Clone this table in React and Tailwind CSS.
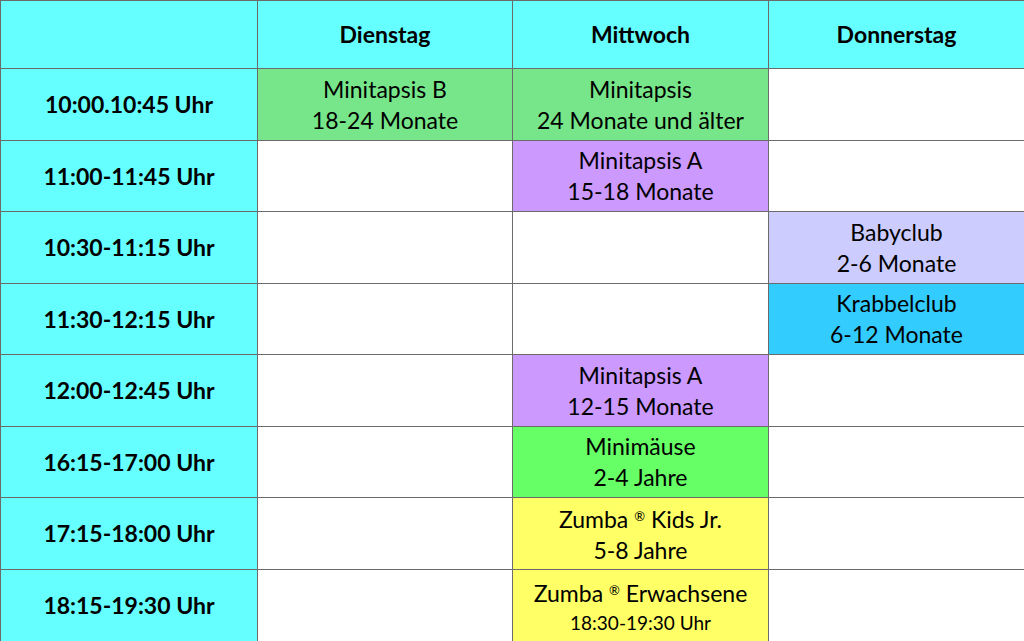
import React from "react";

const cols = ["w-[257px]", "w-[255px]", "w-[256px]", "w-[256px]"];

const colors = {
    cyan: "bg-[#66ffff]",
    green: "bg-[#77e68a]",
    purple: "bg-[#cc99ff]",
    lavender: "bg-[#ccccff]",
    blue: "bg-[#33ccff]",
    lime: "bg-[#66ff66]",
    yellow: "bg-[#ffff66]",
    white: "bg-white",
};

const rows = [
    {
        h: "h-[72px]",
        time: "10:00.10:45 Uhr",
        cells: [
            { c: "green", lines: ["Minitapsis B", "18-24 Monate"] },
            { c: "green", lines: ["Minitapsis", "24 Monate und älter"] },
            null,
        ],
    },
    {
        h: "h-[71px]",
        time: "11:00-11:45 Uhr",
        cells: [null, { c: "purple", lines: ["Minitapsis A", "15-18 Monate"] }, null],
    },
    {
        h: "h-[72px]",
        time: "10:30-11:15 Uhr",
        cells: [null, null, { c: "lavender", lines: ["Babyclub", "2-6 Monate"] }],
    },
    {
        h: "h-[71px]",
        time: "11:30-12:15 Uhr",
        cells: [null, null, { c: "blue", lines: ["Krabbelclub", "6-12 Monate"] }],
    },
    {
        h: "h-[72px]",
        time: "12:00-12:45 Uhr",
        cells: [null, { c: "purple", lines: ["Minitapsis A", "12-15 Monate"] }, null],
    },
    {
        h: "h-[71px]",
        time: "16:15-17:00 Uhr",
        cells: [null, { c: "lime", lines: ["Minimäuse", "2-4 Jahre"] }, null],
    },
    {
        h: "h-[72px]",
        time: "17:15-18:00 Uhr",
        cells: [null, { c: "yellow", zumba: "Kids Jr.", lines: ["5-8 Jahre"] }, null],
    },
    {
        h: "h-[72px]",
        time: "18:15-19:30 Uhr",
        cells: [
            null,
            { c: "yellow", zumba: "Erwachsene", lines: [], small: "18:30-19:30 Uhr" },
            null,
        ],
    },
];

function Cell({ w, bg, children }) {
    return (
        <div
            className={`${w} ${bg} h-full shrink-0 border-r border-b border-[#6b6b6b] flex flex-col items-center justify-center text-center`}
        >
            {children}
        </div>
    );
}

export default function App() {
    return (
        <div
            className="w-[1024px] h-[641px] overflow-hidden bg-white text-black border-t border-l border-[#6b6b6b] box-border"
            style={{ fontFamily: "Lato, 'Open Sans', sans-serif" }}
        >
            <div className="flex h-[68px]">
                <Cell w={cols[0]} bg={colors.cyan} />
                {["Dienstag", "Mittwoch", "Donnerstag"].map((d, i) => (
                    <Cell key={d} w={cols[i + 1]} bg={colors.cyan}>
                        <span className="text-[23px] font-bold">{d}</span>
                    </Cell>
                ))}
            </div>
            {rows.map((r) => (
                <div key={r.time} className={`flex ${r.h}`}>
                    <Cell w={cols[0]} bg={colors.cyan}>
                        <span className="text-[23px] font-bold">{r.time}</span>
                    </Cell>
                    {r.cells.map((cell, i) => (
                        <Cell
                            key={i}
                            w={cols[i + 1]}
                            bg={cell ? colors[cell.c] : colors.white}
                        >
                            {cell && cell.zumba && (
                                <span className="text-[23px] leading-[31px]">
                                    Zumba <span className="text-[13px] align-[7px]">®</span>{" "}
                                    {cell.zumba}
                                </span>
                            )}
                            {cell &&
                                cell.lines.map((l) => (
                                    <span key={l} className="text-[23px] leading-[31px]">
                                        {l}
                                    </span>
                                ))}
                            {cell && cell.small && (
                                <span className="text-[19px] leading-[27px]">{cell.small}</span>
                            )}
                        </Cell>
                    ))}
                </div>
            ))}
        </div>
    );
}
